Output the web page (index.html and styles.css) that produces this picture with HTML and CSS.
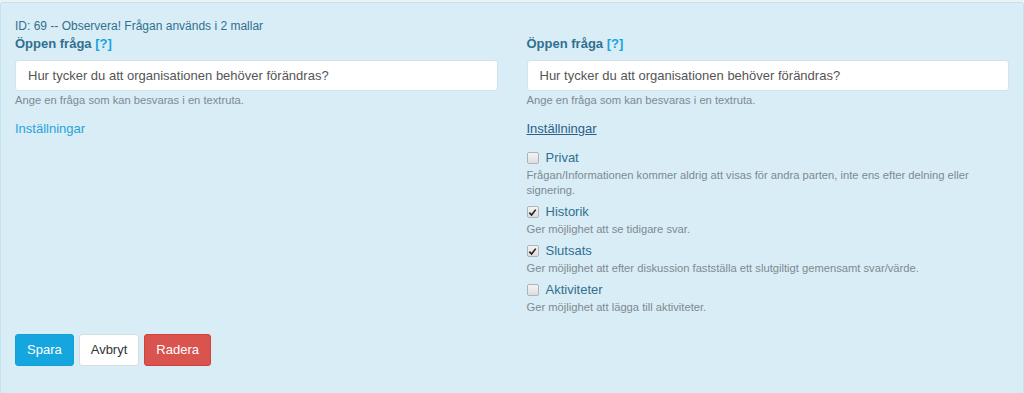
FILE: index.html
```html
<!DOCTYPE html>
<html lang="sv">
<head>
<meta charset="utf-8">
<title>Öppen fråga</title>
<link rel="stylesheet" href="styles.css">
</head>
<body>
<div class="panel">
  <div class="meta">ID: 69 -- Observera! Frågan används i 2 mallar</div>
  <div class="row">
    <div class="col">
      <div class="label">Öppen fråga <a class="help">[?]</a></div>
      <div class="input">Hur tycker du att organisationen behöver förändras?</div>
      <div class="hint">Ange en fråga som kan besvaras i en textruta.</div>
      <a class="settings">Inställningar</a>
    </div>
    <div class="col">
      <div class="label">Öppen fråga <a class="help">[?]</a></div>
      <div class="input">Hur tycker du att organisationen behöver förändras?</div>
      <div class="hint">Ange en fråga som kan besvaras i en textruta.</div>
      <a class="settings active">Inställningar</a>
      <div class="options">
        <div class="opt">
          <div class="opt-label"><span class="box"></span>Privat</div>
          <div class="opt-desc">Frågan/Informationen kommer aldrig att visas för andra parten, inte ens efter delning eller signering.</div>
        </div>
        <div class="opt">
          <div class="opt-label"><span class="box checked"><svg viewBox="0 0 10 10" width="9" height="9"><path d="M1.5 5.2 L4 7.8 L8.6 1.8" fill="none" stroke="#222" stroke-width="1.8"/></svg></span>Historik</div>
          <div class="opt-desc">Ger möjlighet att se tidigare svar.</div>
        </div>
        <div class="opt">
          <div class="opt-label"><span class="box checked"><svg viewBox="0 0 10 10" width="9" height="9"><path d="M1.5 5.2 L4 7.8 L8.6 1.8" fill="none" stroke="#222" stroke-width="1.8"/></svg></span>Slutsats</div>
          <div class="opt-desc">Ger möjlighet att efter diskussion fastställa ett slutgiltigt gemensamt svar/värde.</div>
        </div>
        <div class="opt">
          <div class="opt-label"><span class="box"></span>Aktiviteter</div>
          <div class="opt-desc">Ger möjlighet att lägga till aktiviteter.</div>
        </div>
      </div>
    </div>
  </div>
  <div class="actions">
    <button class="btn primary">Spara</button>
    <button class="btn default">Avbryt</button>
    <button class="btn danger">Radera</button>
  </div>
</div>
</body>
</html>
```
FILE: styles.css
```css
html, body {
  margin: 0;
  padding: 0;
}
body {
  background: #eef1f2;
  font-family: "Liberation Sans", Arial, sans-serif;
  font-size: 13px;
  color: #31708f;
  padding-top: 2px;
  overflow: hidden;
}
.panel {
  background: #d9edf7;
  border: 1px solid #c4e3f0;
  border-radius: 3px;
  padding: 14px 0 40px;
  min-height: 360px;
}
.meta {
  padding: 0 14px;
  font-size: 12px;
  line-height: 18px;
  color: #31708f;
}
.row {
  display: flex;
}
.col {
  flex: 1 1 0;
  padding: 0 14px;
  min-width: 0;
}
.col + .col {
  padding-left: 15px;
}
.label {
  font-weight: bold;
  line-height: 18px;
  color: #31708f;
}
.help {
  color: #1ba3dd;
}
.input {
  margin-top: 7px;
  height: 31px;
  box-sizing: border-box;
  border: 1px solid #d3e3ea;
  border-radius: 3px;
  background: #fff;
  padding: 6px 12px;
  line-height: 18px;
  color: #555;
}
.hint {
  margin-top: 2px;
  font-size: 11.2px;
  line-height: 15px;
  color: #7d8a90;
}
.settings {
  display: block;
  margin-top: 12px;
  line-height: 18px;
  color: #27a3db;
}
.settings.active {
  color: #2b5f86;
  text-decoration: underline;
}
.options {
  margin-top: 10px;
}
.opt {
  margin-bottom: 4px;
}
.opt-label {
  display: flex;
  align-items: center;
  line-height: 20px;
  font-size: 13px;
  color: #31708f;
}
.box {
  width: 10px;
  height: 10px;
  margin: 0 7px 0 0;
  border: 1px solid #b0b4b7;
  border-radius: 2px;
  background: linear-gradient(#f4f4f4, #dedede);
  display: flex;
  align-items: center;
  justify-content: center;
}
.box svg {
  display: block;
}
.opt-desc {
  font-size: 11.2px;
  line-height: 15px;
  color: #7d8a90;
}
.actions {
  margin-top: 15px;
  padding: 0 14px;
  display: flex;
  gap: 5px;
}
.btn {
  font-family: "Liberation Sans", Arial, sans-serif;
  font-size: 13px;
  line-height: 18px;
  padding: 6px 11px;
  border: 1px solid transparent;
  border-radius: 3px;
  cursor: pointer;
}
.primary {
  background: #16a6df;
  border-color: #13a0d8;
  color: #fff;
}
.default {
  background: #fff;
  border-color: #d8dde0;
  color: #333;
}
.danger {
  background: #d9534f;
  border-color: #d43f3a;
  color: #fff;
}
```
